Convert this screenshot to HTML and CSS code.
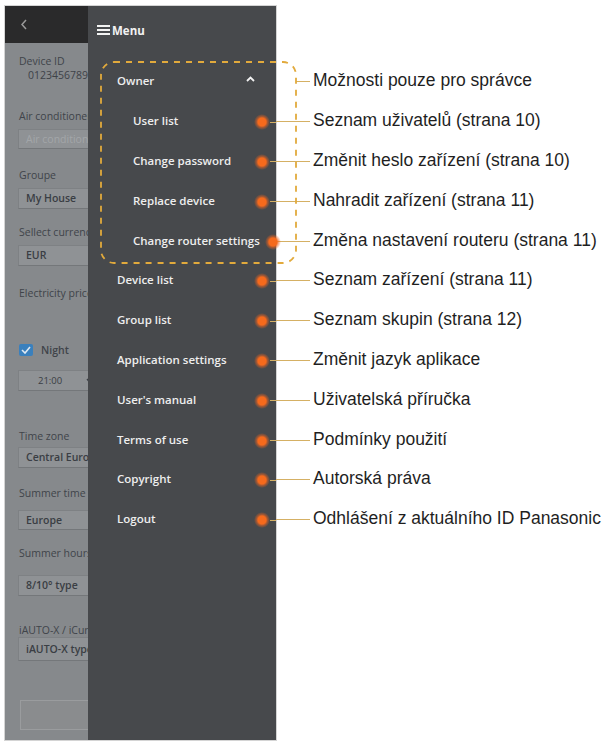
FILE: index.html
```html
<!DOCTYPE html>
<html lang="cs">
<head>
<meta charset="utf-8">
<title>Menu</title>
<link rel="stylesheet" href="styles.css">
</head>
<body>
<div class="page">
  <div class="phone">
    <aside class="settings">
      <div class="topbar">
        <svg class="back" width="6" height="11" viewBox="0 0 6 11"><polyline points="5,1 1,5.5 5,10" fill="none" stroke="#9a9a9a" stroke-width="1.5"/></svg>
      </div>
      <div class="form">
        <div class="label g-device">Device ID</div>
        <div class="value">0123456789</div>
        <div class="label g-air">Air conditioner name</div>
        <div class="field placeholder f-air">Air conditioner name</div>
        <div class="label g-group">Groupe</div>
        <div class="field f-group">My House</div>
        <div class="label g-cur">Sellect currency</div>
        <div class="field f-cur">EUR</div>
        <div class="label g-price">Electricity price</div>
        <div class="check-row">
          <span class="checkbox"><svg width="10" height="8" viewBox="0 0 10 8"><polyline points="1,4 4,7 9,1" fill="none" stroke="#dfe9f3" stroke-width="1.6"/></svg></span>
          <span>Night</span>
        </div>
        <div class="field time"><span>21:00</span><svg class="chev" width="7" height="5" viewBox="0 0 7 5"><polyline points="1,1 3.5,4 6,1" fill="none" stroke="#3a3e44" stroke-width="1.3"/></svg></div>
        <div class="label g-tz">Time zone</div>
        <div class="field f-tz">Central Europe</div>
        <div class="label g-st">Summer time</div>
        <div class="field f-st">Europe</div>
        <div class="label g-sh">Summer hours</div>
        <div class="field f-sh">8/10° type</div>
        <div class="label g-ia">iAUTO-X / iCurve</div>
        <div class="field f-ia">iAUTO-X type</div>
        <div class="button-box"></div>
      </div>
    </aside>
    <nav class="menu">
      <div class="menu-head">
        <svg width="13" height="10" viewBox="0 0 13 10"><rect x="0" y="0" width="13" height="2" fill="#f2f2f2"/><rect x="0" y="4" width="13" height="2" fill="#f2f2f2"/><rect x="0" y="8" width="13" height="2" fill="#f2f2f2"/></svg>
        <span>Menu</span>
      </div>
      <ul class="menu-list">
        <li class="item"><span>Owner</span><svg class="caret" width="9" height="6" viewBox="0 0 9 6"><polyline points="1,5 4.5,1.5 8,5" fill="none" stroke="#f2f2f2" stroke-width="1.8"/></svg></li>
        <li class="item sub"><span>User list</span><i class="dot"></i><i class="conn"></i></li>
        <li class="item sub"><span>Change password</span><i class="dot"></i><i class="conn"></i></li>
        <li class="item sub"><span>Replace device</span><i class="dot"></i><i class="conn"></i></li>
        <li class="item sub"><span>Change router settings</span><i class="dot dot-edge"></i></li>
        <li class="item"><span>Device list</span><i class="dot"></i><i class="conn"></i></li>
        <li class="item"><span>Group list</span><i class="dot"></i><i class="conn"></i></li>
        <li class="item"><span>Application settings</span><i class="dot"></i><i class="conn"></i></li>
        <li class="item"><span>User's manual</span><i class="dot"></i><i class="conn"></i></li>
        <li class="item"><span>Terms of use</span><i class="dot"></i><i class="conn"></i></li>
        <li class="item"><span>Copyright</span><i class="dot"></i><i class="conn"></i></li>
        <li class="item"><span>Logout</span><i class="dot"></i><i class="conn"></i></li>
      </ul>
    </nav>
  </div>
  <ul class="notes">
    <li class="note first"><i class="lead"></i>Možnosti pouze pro správce</li>
    <li class="note"><i class="lead"></i>Seznam uživatelů (strana 10)</li>
    <li class="note"><i class="lead"></i>Změnit heslo zařízení (strana 10)</li>
    <li class="note"><i class="lead"></i>Nahradit zařízení (strana 11)</li>
    <li class="note"><i class="lead"></i>Změna nastavení routeru (strana 11)</li>
    <li class="note"><i class="lead"></i>Seznam zařízení (strana 11)</li>
    <li class="note"><i class="lead"></i>Seznam skupin (strana 12)</li>
    <li class="note"><i class="lead"></i>Změnit jazyk aplikace</li>
    <li class="note"><i class="lead"></i>Uživatelská příručka</li>
    <li class="note"><i class="lead"></i>Podmínky použití</li>
    <li class="note"><i class="lead"></i>Autorská práva</li>
    <li class="note"><i class="lead"></i>Odhlášení z aktuálního ID Panasonic</li>
  </ul>
  <svg class="owner-box" width="199" height="204" viewBox="0 0 199 204"><rect x="1" y="1" width="195" height="201" rx="13" ry="13" fill="none" stroke="#e2aa3c" stroke-width="1.8" stroke-dasharray="6 6"/></svg>
</div>
</body>
</html>
```

FILE: styles.css
```css
html, body {
  margin: 0;
  padding: 0;
  background: #ffffff;
}

.page {
  position: relative;
  width: 606px;
  height: 743px;
  display: flex;
  align-items: flex-start;
  overflow: hidden;
}

.phone {
  margin: 6px 0 0 5px;
  width: 271px;
  height: 734px;
  display: flex;
  flex: none;
  box-shadow: 0 0 0 1px #d4d4d4;
}

/* left greyed settings column */
.settings {
  width: 83px;
  flex: none;
  background: #86898c;
  overflow: hidden;
  display: flex;
  flex-direction: column;
  font-family: "Open Sans", "Noto Sans", sans-serif;
  font-size: 10.5px;
  color: #3a3e44;
}

.topbar {
  height: 37px;
  flex: none;
  background: #2a2a2b;
  display: flex;
  align-items: center;
  padding-left: 16px;
  box-sizing: border-box;
}

.form {
  padding-left: 13px;
  width: 170px;
  display: flex;
  flex-direction: column;
  align-items: flex-start;
}

.label {
  height: 14px;
  line-height: 14px;
  padding-left: 1px;
  white-space: nowrap;
  color: #40444a;
}

.value {
  height: 14px;
  line-height: 14px;
  padding-left: 10px;
  white-space: nowrap;
  color: #3e4248;
}

.field {
  box-sizing: border-box;
  width: 140px;
  height: 21px;
  line-height: 19px;
  padding-left: 7px;
  background: #8f9295;
  border: 1px solid #7e8184;
  border-bottom-color: #74777a;
  white-space: nowrap;
  font-weight: 600;
  color: #3a3e44;
}

.placeholder {
  height: 20px;
  color: #a3a6a9;
  font-weight: 400;
}

.g-device { margin-top: 11px; }
.g-air { margin-top: 27px; }
.f-air { margin-top: 6px; }
.g-group { margin-top: 19px; }
.f-group { margin-top: 6px; }
.g-cur { margin-top: 16px; }
.f-cur { margin-top: 6px; }
.g-price { margin-top: 20px; }
.g-tz { margin-top: 38px; }
.f-tz { margin-top: 4px; }
.g-st { margin-top: 18px; }
.f-st { margin-top: 10px; height: 20px; }
.g-sh { margin-top: 16px; }
.f-sh { margin-top: 15px; }
.g-ia { margin-top: 27px; }
.f-ia { margin-top: 0; height: 24px; line-height: 22px; }

.check-row {
  margin-top: 43px;
  height: 14px;
  display: flex;
  align-items: center;
  gap: 8px;
  padding-left: 1px;
  font-weight: 600;
  color: #40444a;
}

.checkbox {
  width: 14px;
  height: 12px;
  border-radius: 2px;
  background: #3a80bd;
  display: flex;
  align-items: center;
  justify-content: center;
}

.time {
  margin-top: 13px;
  padding-left: 19px;
  display: flex;
  align-items: center;
  font-weight: 400;
  font-size: 9.5px;
}

.chev {
  margin-left: 24px;
  flex: none;
}

.button-box {
  margin-top: 39px;
  margin-left: 2px;
  width: 80px;
  height: 30px;
  box-sizing: border-box;
  border: 1px solid #9a9c9e;
  background: #8a8c8e;
}

/* menu panel */
.menu {
  width: 188px;
  flex: none;
  background: #47494c;
  display: flex;
  flex-direction: column;
  font-family: "Open Sans", "Noto Sans", sans-serif;
  color: #eeeeee;
}

.menu-head {
  margin: 17px 0 0 9px;
  height: 14px;
  display: flex;
  align-items: center;
  gap: 2px;
  font-size: 11.5px;
  font-weight: 700;
  color: #f2f2f2;
}

.menu-list {
  list-style: none;
  margin: 24px 0 0 0;
  padding: 0;
}

.item {
  height: 39.8px;
  display: flex;
  align-items: center;
  padding-left: 29px;
  font-size: 11.5px;
  font-weight: 600;
  white-space: nowrap;
}

.item.sub {
  padding-left: 45px;
}

.caret {
  margin-left: auto;
  margin-right: 21px;
  margin-top: -3px;
}

.dot {
  position: relative;
  z-index: 2;
  margin-left: auto;
  margin-top: 3px;
  width: 16px;
  height: 16px;
  flex: none;
  border-radius: 50%;
  background: radial-gradient(circle, #f66a1c 0, #f66a1c 4px, rgba(240, 100, 30, 0.55) 5.5px, rgba(240, 100, 30, 0) 8px);
}

.dot-edge {
  margin-right: -5px;
}

.conn {
  width: 6px;
  height: 1px;
  margin-top: 3px;
  flex: none;
  background: #d5b064;
}

/* annotations */
.notes {
  list-style: none;
  margin: 0;
  padding: 61px 0 0 0;
  flex: 1;
  font-family: "Liberation Sans", Arial, sans-serif;
  font-size: 17.5px;
  color: #1f1f1f;
}

.note {
  height: 39.8px;
  display: flex;
  align-items: center;
  white-space: nowrap;
}

.note .lead {
  width: 34px;
  height: 1px;
  margin-right: 3px;
  margin-top: 2px;
  flex: none;
  background: #d5b064;
}

.note.first .lead {
  width: 14px;
  margin-left: 20px;
}

.owner-box {
  position: absolute;
  left: 100px;
  top: 61px;
}
```
